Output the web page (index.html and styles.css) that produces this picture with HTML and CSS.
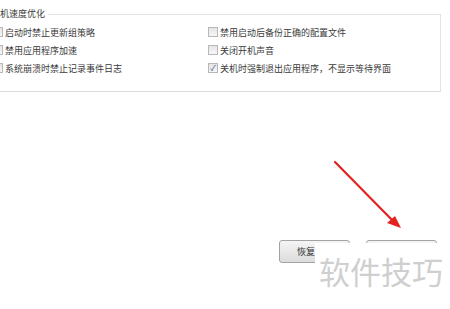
FILE: index.html
```html
<!DOCTYPE html>
<html lang="zh-CN">
<head>
    <meta charset="UTF-8">
    <title>系统优化</title>
    <link rel="stylesheet" href="styles.css">
</head>
<body>
    <fieldset class="group">
        <legend>机速度优化</legend>
        <div class="options">
            <label class="option"><span class="box"></span>启动时禁止更新组策略</label>
            <label class="option"><span class="box"></span>禁用启动后备份正确的配置文件</label>
            <label class="option"><span class="box"></span>禁用应用程序加速</label>
            <label class="option"><span class="box"></span>关闭开机声音</label>
            <label class="option"><span class="box"></span>系统崩溃时禁止记录事件日志</label>
            <label class="option"><span class="box checked">✓</span>关机时强制退出应用程序，不显示等待界面</label>
        </div>
    </fieldset>

    <div class="actions">
        <button class="btn btn-restore">恢复</button>
        <button class="btn"></button>
    </div>

    <svg class="arrow" width="90" height="90" viewBox="0 0 90 90">
        <line x1="4" y1="2" x2="66" y2="65" stroke="#e3231f" stroke-width="2.2" stroke-linecap="round"/>
        <polygon points="70,68 56,63 64,56" fill="#e3231f"/>
    </svg>

    <div class="watermark">软件技巧</div>
</body>
</html>
```

FILE: styles.css
```css
body {
    margin: 0;
    background: #fff;
    font-family: "Noto Sans CJK SC", "Noto Sans", sans-serif;
    font-size: 9px;
    color: #3a3a3a;
    height: 309px;
    overflow: hidden;
}
.group {
    margin: 8px 9px 0 -12px;
    padding: 3px 0 14px 0;
    border: 1px solid #e1e4e6;
    border-bottom-color: #d9dcde;
}
.group legend {
    margin-left: 11px;
    padding: 0 3px 0 0;
    height: 12px;
    line-height: 12px;
}
.options {
    display: grid;
    grid-template-columns: 215px 1fr;
}
.option {
    display: flex;
    align-items: center;
    height: 18px;
    gap: 2px;
    padding-left: 4px;
}
.box {
    width: 8px;
    height: 8px;
    border: 1px solid #b8b8b8;
    background: linear-gradient(#e4e4e4, #f7f7f7);
    font-size: 8px;
    line-height: 8px;
    text-align: center;
    color: #36508a;
}
.actions {
    display: flex;
    justify-content: flex-end;
    gap: 16px;
    margin: 148px 13px 0 0;
}
.btn {
    width: 71px;
    height: 23px;
    padding: 0;
    font-family: inherit;
    font-size: 9px;
    color: #333;
    border: 1px solid #a3a3a3;
    border-radius: 3px;
    background: linear-gradient(#f5f5f5, #dcdcdc);
}
.btn-restore {
    text-align: left;
    padding-left: 17px;
}
.arrow {
    position: absolute;
    left: 331px;
    top: 160px;
}
.watermark {
    position: absolute;
    left: 315px;
    top: 243px;
    right: 0;
    bottom: 0;
    background: #fff;
    padding: 11px 0 0 4px;
    font-size: 31px;
    line-height: 34px;
    color: #cfcfcf;
}
```
